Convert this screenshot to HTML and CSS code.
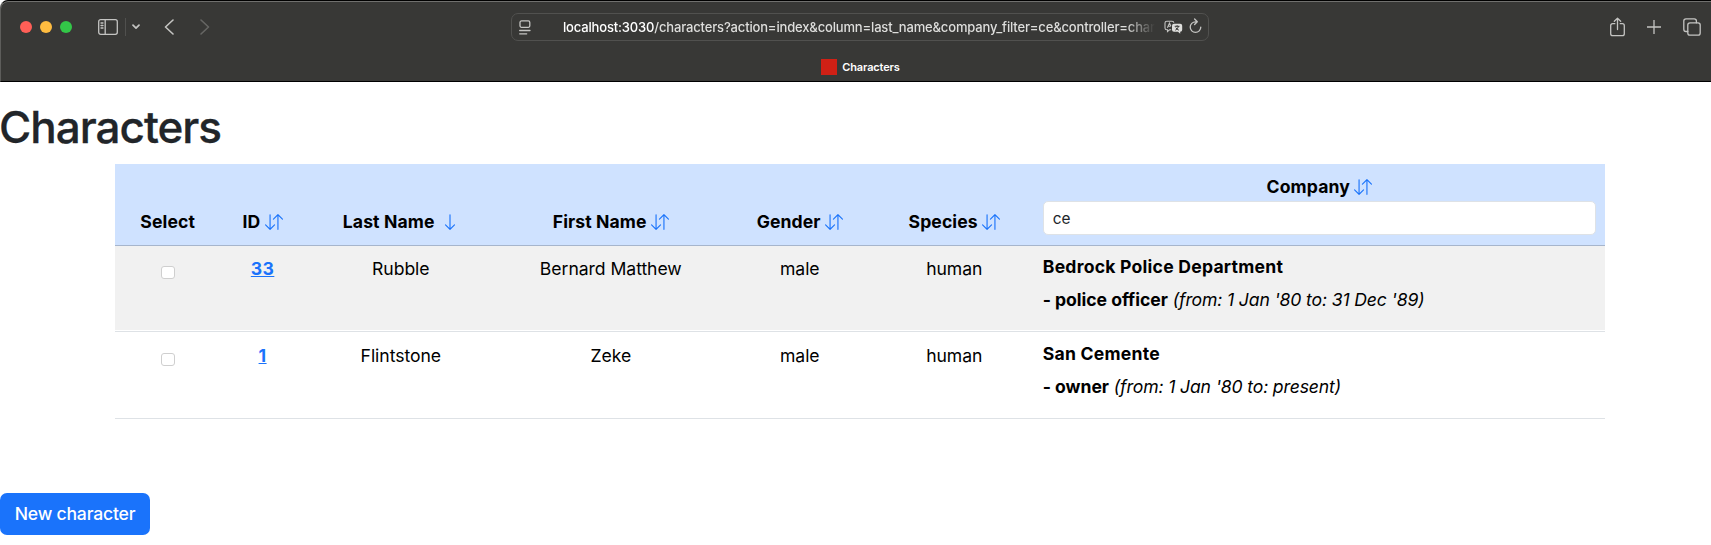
FILE: index.html
```html
<!DOCTYPE html>
<html lang="en">
<head>
<meta charset="utf-8">
<title>Characters</title>
<link rel="stylesheet" href="styles.css">
</head>
<body>
<svg class="defs" aria-hidden="true">
  <symbol id="sort" viewBox="0 0 16 16"><path fill-rule="evenodd" d="M11.5 15a.5.5 0 0 0 .5-.5V2.707l3.146 3.147a.5.5 0 0 0 .708-.708l-4-4a.5.5 0 0 0-.708 0l-4 4a.5.5 0 1 0 .708.708L11 2.707V14.500a.5.5 0 0 0 .5.5m-7-14a.5.5 0 0 1 .5.5v11.793l3.146-3.147a.5.5 0 0 1 .708.708l-4 4a.5.5 0 0 1-.708 0l-4-4a.5.5 0 0 1 .708-.708L4 13.293V1.500a.5.5 0 0 1 .5-.5"/></symbol>
  <symbol id="down" viewBox="0 0 16 16"><path fill-rule="evenodd" d="M8 1a.5.5 0 0 1 .5.5v11.793l3.146-3.147a.5.5 0 0 1 .708.708l-4 4a.5.5 0 0 1-.708 0l-4-4a.5.5 0 0 1 .708-.708L7.500 13.293V1.500A.5.5 0 0 1 8 1"/></symbol>
</svg>
<header class="browser">
  <div class="toolbar">
    <div class="toolbar-left">
      <div class="lights"><i class="light red"></i><i class="light amber"></i><i class="light green"></i></div>
      <svg class="icon sidebar" width="20" height="16" viewBox="0 0 20 16"><rect x=".7" y=".7" width="18.600" height="14.600" rx="2"/><path d="M7.200 1v14M3 4h2M3 6.500h2M3 9h2"/></svg>
      <i class="divider"></i>
      <svg class="icon chevron" width="8" height="6" viewBox="0 0 8 6"><path d="M1 1.200l3 3 3-3"/></svg>
      <svg class="icon back" width="10" height="16" viewBox="0 0 10 16"><path d="M9 1L1.500 8 9 15"/></svg>
      <svg class="icon forward" width="10" height="16" viewBox="0 0 10 16"><path d="M1 1l7.500 7L1 15"/></svg>
    </div>
    <div class="address">
      <svg class="icon reader" width="12" height="15" viewBox="0 0 12 15"><rect x="1" y=".9" width="9.800" height="6.400" rx="1.500"/><path d="M.7 10.500h10.300M.7 13.800h7"/></svg>
      <div class="url"><b>localhost:3030</b>/characters?action=index&amp;column=last_name&amp;company_filter=ce&amp;controller=chara</div>
      <svg class="translate" width="19" height="15" viewBox="0 0 19 15"><path class="line" d="M7.200 9.800H5.500L3.500 11.600V9.800H2.800Q1 9.800 1 8V3Q1 1.200 2.800 1.200H8Q9.800 1.200 9.800 2.800M3.400 7.800L5.500 3l1.400 3.200M4.200 6.200h2.500"/><path class="solid" d="M10 3.800h6.200q2 0 2 2v4q0 2-2 2v2l-2.200-2H10q-2 0-2-2v-4q0-2 2-2z"/><path class="mark" d="M10.700 6.300h4.800M13.100 5.200v1.100M11.300 10.200q2.700-1.200 3.200-3.900M11.800 7.600q1 1.800 3.100 2.600"/></svg>
      <svg class="icon reload" width="13" height="16" viewBox="0 0 13 16"><path d="M8 3.800H6.500a5.300 5.300 0 1 0 5.300 5.300M5.600 1l2.700 2.800-2.700 2.700"/></svg>
    </div>
    <div class="toolbar-right">
      <svg class="icon" width="15" height="20" viewBox="0 0 15 20"><path d="M4.800 6.700H2.700q-2 0-2 2v8q0 2 2 2h9.600q2 0 2-2v-8q0-2-2-2h-2.100M7.500 12.500V1.200M4.300 4.200l3.200-3 3.200 3"/></svg>
      <svg class="icon" width="14" height="14" viewBox="0 0 14 14"><path d="M7 0v14M0 7h14"/></svg>
      <svg class="icon" width="18" height="18" viewBox="0 0 18 18"><rect x="4.800" y="4.800" width="12.400" height="12.400" rx="2.200"/><path d="M4.800 13.500H3q-2.200 0-2.200-2.200V3Q.8.800 3 .8h8.200q2.200 0 2.200 2.200v1.800"/></svg>
    </div>
  </div>
  <div class="tab"><i class="favicon"></i>Characters</div>
</header>
<main>
  <h1>Characters</h1>
  <table class="characters">
    <colgroup><col class="c-select"><col class="c-id"><col class="c-last"><col class="c-first"><col class="c-gender"><col class="c-species"><col></colgroup>
    <thead>
      <tr>
        <th>Select</th>
        <th>ID <svg class="sort"><use href="#sort"/></svg></th>
        <th>Last Name <svg class="sort single"><use href="#down"/></svg></th>
        <th>First Name <svg class="sort"><use href="#sort"/></svg></th>
        <th>Gender <svg class="sort"><use href="#sort"/></svg></th>
        <th>Species <svg class="sort"><use href="#sort"/></svg></th>
        <th class="company-head">Company <svg class="sort"><use href="#sort"/></svg><input class="filter" type="text" value="ce"></th>
      </tr>
    </thead>
    <tbody>
      <tr class="striped">
        <td><input class="check" type="checkbox"></td>
        <td><a href="#">33</a></td><td>Rubble</td><td>Bernard Matthew</td><td>male</td><td>human</td>
        <td class="company"><p class="employer">Bedrock Police Department</p><p><b>- police officer</b> <em>(from: 1 Jan '80 to: 31 Dec '89)</em></p></td>
      </tr>
      <tr class="plain">
        <td><input class="check" type="checkbox"></td>
        <td><a href="#">1</a></td><td>Flintstone</td><td>Zeke</td><td>male</td><td>human</td>
        <td class="company"><p class="employer">San Cemente</p><p><b>- owner</b> <em>(from: 1 Jan '80 to: present)</em></p></td>
      </tr>
    </tbody>
  </table>
  <a class="button" href="#">New character</a>
</main>
</body>
</html>
```
FILE: styles.css
```css
* { box-sizing: border-box; }
body { margin: 0; background: #fff; color: #212529; font: 17.6px/26.4px Inter, "Liberation Sans", sans-serif; overflow: hidden; }
.defs { display: none; }

/* Browser chrome */
.browser { height: 82px; background: #383836; border-top: 1px solid #000; border-bottom: 1px solid #000; border-left: 1px solid #5d5d5b; box-shadow: inset 0 1px #70706e; border-top-left-radius: 8px; color: #fff; }
.toolbar { height: 52px; display: grid; grid-template-columns: 510px 698px 1fr; align-items: center; }
.toolbar-left { display: flex; align-items: center; padding-left: 19px; }
.lights { display: flex; gap: 8px; }
.light { width: 12px; height: 12px; border-radius: 50%; }
.red { background: #ff5f57; }
.amber { background: #febc40; }
.green { background: #33c748; }
.icon { display: block; fill: none; stroke: #c4c4c2; stroke-width: 1.3; stroke-linecap: round; stroke-linejoin: round; flex: none; }
.sidebar { margin-left: 26px; }
.divider { width: 1px; height: 18px; margin-left: 7px; background: #50504e; }
.chevron { margin-left: 6px; stroke-width: 1.7; }
.back { margin-left: 24px; stroke-width: 1.6; }
.forward { margin-left: 26px; stroke: #666664; stroke-width: 1.6; }
.address { height: 28px; display: flex; align-items: center; padding: 0 6px 0 7px; border: 1px solid #51514f; border-radius: 7px; }
.url { width: 594px; margin-left: 32px; overflow: hidden; white-space: nowrap; font-size: 13px; font-weight: 500; line-height: 20px; letter-spacing: -0.16px; color: #dededc; -webkit-mask-image: linear-gradient(90deg, #000 95%, transparent 100%); mask-image: linear-gradient(90deg, #000 95%, transparent 100%); }
.url b { font-weight: 500; color: #fff; }
.translate { margin-left: 9px; flex: none; fill: none; }
.translate .line { stroke: #c4c4c2; stroke-width: 1.1; }
.translate .solid { fill: #dededc; }
.translate .mark { stroke: #383836; stroke-width: 1; }
.reload { margin: -2px 0 0 6px; }
.toolbar-right { display: flex; align-items: center; justify-content: flex-end; gap: 22px; padding-right: 10px; }
.tab { display: flex; align-items: center; justify-content: center; gap: 5px; height: 28px; font-size: 11px; font-weight: 600; line-height: 16px; letter-spacing: -0.15px; padding-left: 9px; }
.favicon { width: 16px; height: 16px; background: #d02015; }

/* Page */
h1 { margin: 18px 0 9px -1px; font-size: 44px; line-height: 55px; font-weight: 500; letter-spacing: -1px; -webkit-text-stroke: .3px #212529; }
.characters { width: 1490px; margin: 0 0 74px 115px; table-layout: fixed; border-collapse: separate; border-spacing: 0; color: #000; text-align: center; }
.c-select { width: 105.400px; }
.c-id { width: 84.400px; }
.c-last { width: 192px; }
.c-first { width: 228px; }
.c-gender { width: 150px; }
.c-species { width: 159px; }
th { height: 82px; padding: 9px 9px 10px; vertical-align: bottom; background: #cfe2ff; border-bottom: 1px solid #a6b5cc; font-weight: 700; white-space: nowrap; letter-spacing: 0.1px; }
.sort { width: 18px; height: 18px; vertical-align: -3px; fill: #1a73fb; }
.single { margin-left: 2px; }
.company-head { padding-top: 8px; padding-bottom: 10px; }
.filter { display: block; width: 100%; height: 34px; margin-top: 1px; padding: 0 8px 0 9px; border: 1px solid #dee2e6; border-radius: 5px; background: #fff; color: #212529; font: 15.400px Inter, sans-serif; }
td { height: 87px; padding: 10px 9px 0; vertical-align: top; border-bottom: 1px solid #dee2e6; letter-spacing: -0.05px; }
.striped td { height: 86px; background: linear-gradient(#f1f1f1, #f1f1f1) 0 0 / 100% 84px no-repeat; }
.plain td { padding-top: 11px; }
.characters a { color: #1a73fb; font-weight: 700; letter-spacing: .4px; }
.check { appearance: none; display: block; width: 14px; height: 13px; margin: 10px auto 0; border: 1px solid #cfcfcf; border-radius: 3px; background: #fff; }
.characters .company { padding-top: 8px; text-align: left; }
.characters .plain .company { padding-top: 9px; }
.company p { margin: 0 0 7px; }
.company .employer { font-weight: 700; letter-spacing: 0.23px; }
.company b { font-weight: 700; letter-spacing: -0.05px; }
.company em { letter-spacing: -0.14px; }
.button { display: inline-block; width: 150px; height: 42px; padding: 8px 0; border-radius: 7px; background: #1a73fb; color: #fff; font-weight: 500; text-align: center; text-decoration: none; letter-spacing: -0.2px; }
```
